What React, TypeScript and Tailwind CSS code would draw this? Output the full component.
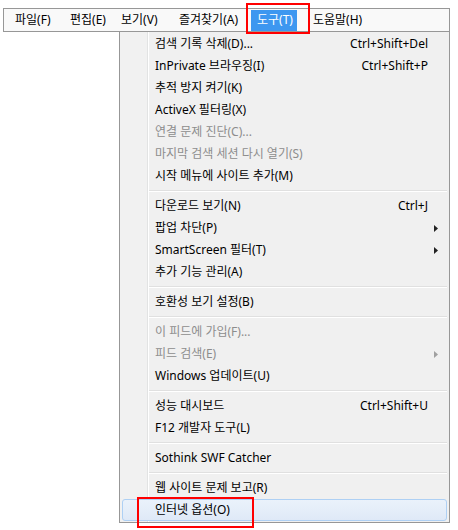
import React from "react";

type Item =
  | { sep: true }
  | { label: string; shortcut?: string; sub?: boolean; disabled?: boolean; active?: boolean; sep?: false };

const items: Item[] = [
  { label: "검색 기록 삭제(D)...", shortcut: "Ctrl+Shift+Del" },
  { label: "InPrivate 브라우징(I)", shortcut: "Ctrl+Shift+P" },
  { label: "추적 방지 켜기(K)" },
  { label: "ActiveX 필터링(X)" },
  { label: "연결 문제 진단(C)...", disabled: true },
  { label: "마지막 검색 세션 다시 열기(S)", disabled: true },
  { label: "시작 메뉴에 사이트 추가(M)" },
  { sep: true },
  { label: "다운로드 보기(N)", shortcut: "Ctrl+J" },
  { label: "팝업 차단(P)", sub: true },
  { label: "SmartScreen 필터(T)", sub: true },
  { label: "추가 기능 관리(A)" },
  { sep: true },
  { label: "호환성 보기 설정(B)" },
  { sep: true },
  { label: "이 피드에 가입(F)...", disabled: true },
  { label: "피드 검색(E)", disabled: true, sub: true },
  { label: "Windows 업데이트(U)" },
  { sep: true },
  { label: "성능 대시보드", shortcut: "Ctrl+Shift+U" },
  { label: "F12 개발자 도구(L)" },
  { sep: true },
  { label: "Sothink SWF Catcher" },
  { sep: true },
  { label: "웹 사이트 문제 보고(R)" },
  { label: "인터넷 옵션(O)", active: true },
];

const menus = [
  { label: "파일(F)", w: "w-[55px]", pl: "pl-[10px]" },
  { label: "편집(E)", w: "w-[51px]", pl: "pl-[10px]" },
  { label: "보기(V)", w: "w-[58px]", pl: "pl-[10px]" },
  { label: "즐겨찾기(A)", w: "w-[83px]", pl: "pl-[10px]" },
];

function Arrow({ disabled }: { disabled?: boolean }) {
  return (
    <svg width="4" height="7" viewBox="0 0 4 7" className="mr-[8px]">
      <path d="M0 0 L4 3.5 L0 7 Z" fill={disabled ? "#a0a0a0" : "#222"} />
    </svg>
  );
}

export default function App() {
  return (
    <div className="relative w-[458px] h-[530px] bg-white text-[12px] leading-none text-black font-['Noto_Sans','Noto_Sans_CJK_KR',sans-serif]">
      <div className="pt-[8px] pl-[3px]">
        {/* menu bar */}
        <div className="flex items-center w-[447px] h-[24px] border border-[#979797] bg-[#f9f9f9] pl-[1px]">
          {menus.map((m) => (
            <div key={m.label} className={`${m.w} ${m.pl} h-full flex items-center`}>
              {m.label}
            </div>
          ))}
          <div className="ml-[-1px] w-[46px] h-[21px] pl-[6px] flex items-center bg-[#3d97f0] text-white">
            도구(T)
          </div>
          <div className="pl-[16px] flex items-center">도움말(H)</div>
        </div>

        {/* dropdown */}
        <div className="ml-[116px] w-[331px] border border-t-0 border-[#979797] py-[1px] bg-[linear-gradient(to_right,#f1f1f1_27px,#e2e3e3_27px,#e2e3e3_28px,#ffffff_28px,#ffffff_29px,#f0f0f0_29px)]">
          {items.map((it, i) =>
            it.sep ? (
              <div key={i} className="h-[8px] ml-[29px] mr-[2px] pt-[3px]">
                <div className="border-t border-[#e0e0e0]" />
                <div className="border-t border-white" />
              </div>
            ) : (
              <div
                key={i}
                className={`mx-[2px] h-[22px] flex items-center pl-[32px] rounded-[3px] border ${
                  it.active
                    ? "border-[#aed0f4] bg-[linear-gradient(to_bottom,#eaf2fb,#dfe9f7)]"
                    : "border-transparent"
                } ${it.disabled ? "text-[#8d8d8d]" : "text-black"}`}
              >
                <span className="flex-1 whitespace-nowrap">{it.label}</span>
                {it.shortcut && <span className="pr-[18px] whitespace-nowrap">{it.shortcut}</span>}
                {it.sub && <Arrow disabled={it.disabled} />}
              </div>
            )
          )}
        </div>
      </div>

      {/* annotation boxes */}
      <div className="absolute left-[246px] top-[3px] w-[64px] h-[31px] border-2 border-[#f00]" />
      <div className="absolute left-[137px] top-[497px] w-[117px] h-[31px] border-2 border-[#f00]" />
    </div>
  );
}
